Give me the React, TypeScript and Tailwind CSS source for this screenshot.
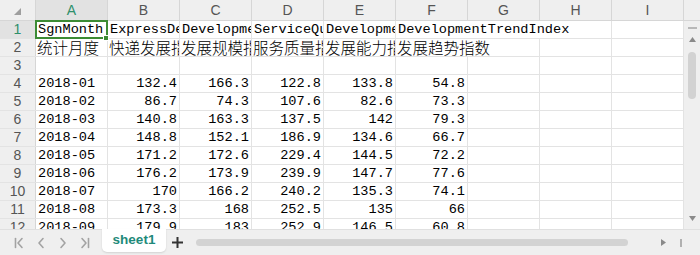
import React from "react";

const COLS = ["A", "B", "C", "D", "E", "F", "G", "H", "I"];

type Cell = string | number | null;

const DATA: Cell[][] = [
  ["SgnMonth", "ExpressDevelopmentIndex", "DevelopmentScaleIndex", "ServiceQualityIndex", "DevelopmentCapabilityIndex", "DevelopmentTrendIndex"],
  ["统计月度", "快递发展指数", "发展规模指数", "服务质量指数", "发展能力指数", "发展趋势指数"],
  [],
  ["2018-01", 132.4, 166.3, 122.8, 133.8, 54.8],
  ["2018-02", 86.7, 74.3, 107.6, 82.6, 73.3],
  ["2018-03", 140.8, 163.3, 137.5, 142, 79.3],
  ["2018-04", 148.8, 152.1, 186.9, 134.6, 66.7],
  ["2018-05", 171.2, 172.6, 229.4, 144.5, 72.2],
  ["2018-06", 176.2, 173.9, 239.9, 147.7, 77.6],
  ["2018-07", 170, 166.2, 240.2, 135.3, 74.1],
  ["2018-08", 173.3, 168, 252.5, 135, 66],
  ["2018-09", 179.9, 183, 252.9, 146.5, 60.8],
];

const isCJK = (s: string) => /[\u4e00-\u9fff]/.test(s);

function DataCell({ value, col, row }: { value: Cell; col: number; row: number }) {
  const overflowRight = (col === 5 && (row === 0 || row === 1)) || (col === 6 && row === 0);
  const base = "w-[72px] shrink-0 h-full border-r flex items-center whitespace-nowrap";
  const borderCls = overflowRight ? "border-transparent overflow-visible" : "border-[#e3e3e3] overflow-hidden";
  if (value === null || value === undefined) {
    return <div className={`${base} ${borderCls}`} />;
  }
  if (typeof value === "number") {
    return (
      <div className={`${base} ${borderCls} justify-end pr-[2px] text-[13.6px] leading-[17px] text-black [font-family:'Liberation_Mono',monospace]`}>
        {value}
      </div>
    );
  }
  if (isCJK(value)) {
    return (
      <div className={`${base} ${borderCls} pl-[1px] text-[15.5px] font-light leading-[17px] text-black [font-family:'Noto_Sans_CJK_SC',sans-serif]`}>
        {value}
      </div>
    );
  }
  return (
    <div className={`${base} ${borderCls} pl-[2px] text-[13.6px] leading-[17px] text-black [font-family:'Liberation_Mono',monospace]`}>
      {value}
    </div>
  );
}

function NavIcon({ kind }: { kind: "first" | "prev" | "next" | "last" }) {
  return (
    <svg width="12" height="12" viewBox="0 0 12 12" fill="none" stroke="#a3a3a3" strokeWidth="1.6" strokeLinecap="round" strokeLinejoin="round">
      {kind === "first" && (
        <>
          <line x1="2.5" y1="1.5" x2="2.5" y2="10.5" />
          <polyline points="9,1.5 5,6 9,10.5" />
        </>
      )}
      {kind === "prev" && <polyline points="8,1.5 4,6 8,10.5" />}
      {kind === "next" && <polyline points="4,1.5 8,6 4,10.5" />}
      {kind === "last" && (
        <>
          <polyline points="3,1.5 7,6 3,10.5" />
          <line x1="9.5" y1="1.5" x2="9.5" y2="10.5" />
        </>
      )}
    </svg>
  );
}

export default function App() {
  return (
    <div className="w-[700px] h-[255px] overflow-hidden bg-white flex flex-col [font-family:'Liberation_Sans',Arial,sans-serif]">
      {/* top area */}
      <div className="flex h-[229px] shrink-0 overflow-hidden">
        <div className="relative w-[684px] shrink-0 overflow-hidden">
          {/* column header */}
          <div className="flex h-[21px] bg-[#efefef] border-b border-[#d6d6d6]">
            <div className="w-[36px] shrink-0 h-full border-r border-[#d6d6d6] relative">
              <svg className="absolute left-[14px] top-[8px]" width="7" height="7" viewBox="0 0 7 7">
                <polygon points="7,0 7,7 0,7" fill="#9e9e9e" />
              </svg>
            </div>
            {COLS.map((c, i) => (
              <div
                key={c}
                className={`w-[72px] shrink-0 h-full border-r border-[#d6d6d6] flex items-center justify-center text-[14px] ${i === 0 ? "bg-[#e2e2e2] text-[#2f8f6a]" : "text-[#555]"}`}
              >
                {c}
              </div>
            ))}
          </div>
          {/* rows */}
          {DATA.map((row, r) => (
            <div key={r} className="flex h-[18px] border-b border-[#e3e3e3]">
              <div
                className={`w-[36px] shrink-0 h-full border-r border-[#d6d6d6] flex items-center justify-center text-[14px] ${r === 0 ? "bg-[#e2e2e2] text-[#2f8f6a]" : "bg-[#efefef] text-[#555]"}`}
              >
                {r + 1}
              </div>
              {COLS.map((c, ci) => (
                <DataCell key={c} value={row[ci] ?? null} col={ci} row={r} />
              ))}
            </div>
          ))}
          {/* selection */}
          <div className="absolute left-[35px] top-[20px] w-[73px] h-[19px] border-2 border-[#3c8b34] pointer-events-none" />
          <div className="absolute left-[103px] top-[35px] w-[6px] h-[6px] bg-[#3c8b34] border border-white pointer-events-none" />
        </div>
        {/* vertical scrollbar */}
        <div className="w-[16px] shrink-0 flex flex-col">
          <div className="h-[21px] shrink-0 bg-[#efefef] border-b border-[#d6d6d6]" />
          <div className="flex-1 bg-[#efefef] relative">
            <div className="absolute left-[4px] top-[6px] w-[9px] h-[2px] bg-[#b8b8b8]" />
            <svg className="absolute left-[5px] top-[16px]" width="7" height="5" viewBox="0 0 7 5">
              <polygon points="3.5,0 7,5 0,5" fill="#8a8a8a" />
            </svg>
            <div className="absolute left-[4px] top-[31px] w-[8px] h-[47px] rounded-full bg-[#d2d2d2]" />
            <svg className="absolute left-[5px] top-[195px]" width="7" height="5" viewBox="0 0 7 5">
              <polygon points="0,0 7,0 3.5,5" fill="#8a8a8a" />
            </svg>
          </div>
        </div>
      </div>
      {/* bottom bar */}
      <div className="flex-1 bg-[#efefef] border-t border-[#e0e0e0] flex items-start">
        <div className="w-[102px] shrink-0 pl-[8px] flex h-[25px] items-center">
          <div className="w-[22px] flex justify-center"><NavIcon kind="first" /></div>
          <div className="w-[22px] flex justify-center"><NavIcon kind="prev" /></div>
          <div className="w-[22px] flex justify-center"><NavIcon kind="next" /></div>
          <div className="w-[22px] flex justify-center"><NavIcon kind="last" /></div>
        </div>
        <div className="w-[64px] h-[23px] shrink-0 -mt-[1px] bg-white rounded-b-[5px] shadow-[0_1px_2px_rgba(0,0,0,0.12)] flex items-center justify-center text-[13.5px] font-bold text-[#1f8a7a]">
          sheet1
        </div>
        <div className="w-[22px] h-[25px] shrink-0 flex items-center justify-center">
          <svg width="11" height="11" viewBox="0 0 11 11">
            <rect x="4.5" y="0" width="2" height="11" fill="#333" />
            <rect x="0" y="4.5" width="11" height="2" fill="#333" />
          </svg>
        </div>
        <div className="h-[25px] flex items-center ml-[8px]">
          <div className="w-[432px] h-[7px] rounded-full bg-[#d3d3d3]" />
        </div>
        <div className="h-[25px] flex items-center ml-[33px]">
          <svg width="5" height="7" viewBox="0 0 5 7">
            <polygon points="0,0 5,3.5 0,7" fill="#8a8a8a" />
          </svg>
        </div>
        <div className="h-[25px] flex items-center ml-[14px]">
          <div className="w-[2px] h-[8px] bg-[#b0b0b0]" />
        </div>
      </div>
    </div>
  );
}
